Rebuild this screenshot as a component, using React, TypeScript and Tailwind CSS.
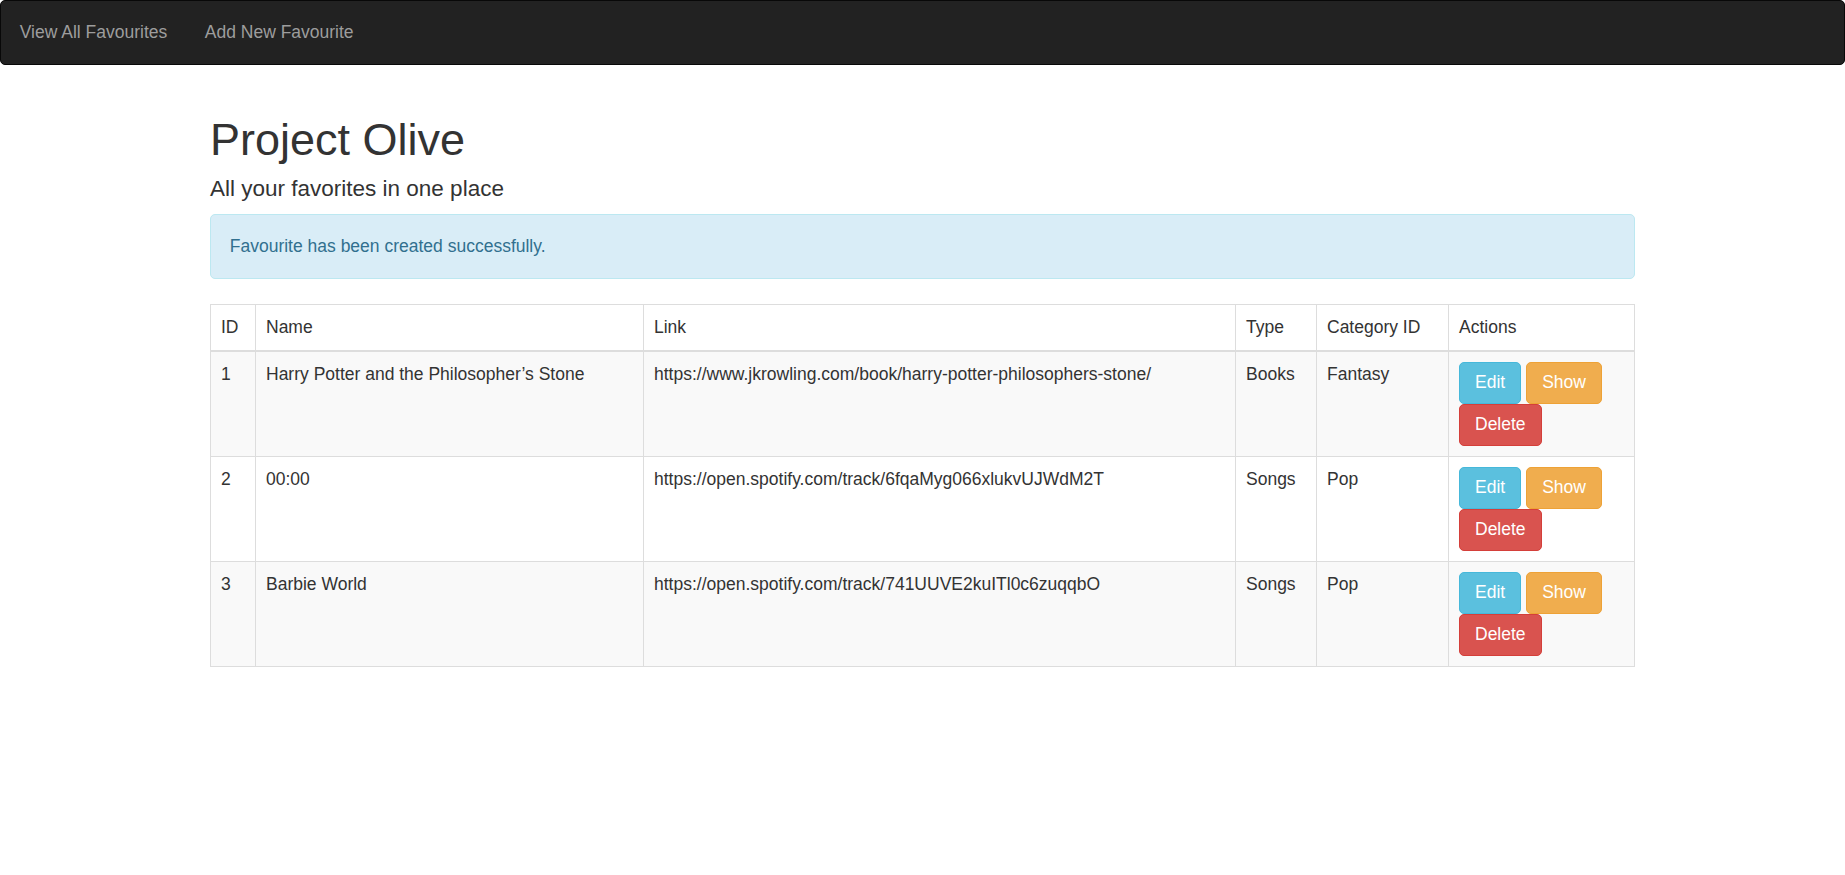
import React from 'react';

type Favourite = {
  id: number;
  name: string;
  link: string;
  type: string;
  category: string;
};

const favourites: Favourite[] = [
  {
    id: 1,
    name: 'Harry Potter and the Philosopher\u2019s Stone',
    link: 'https://www.jkrowling.com/book/harry-potter-philosophers-stone/',
    type: 'Books',
    category: 'Fantasy',
  },
  {
    id: 2,
    name: '00:00',
    link: 'https://open.spotify.com/track/6fqaMyg066xlukvUJWdM2T',
    type: 'Songs',
    category: 'Pop',
  },
  {
    id: 3,
    name: 'Barbie World',
    link: 'https://open.spotify.com/track/741UUVE2kuITl0c6zuqqbO',
    type: 'Songs',
    category: 'Pop',
  },
];

export default function App() {
  return (
    <div className="min-h-screen bg-white font-['Liberation_Sans',Arial,sans-serif] text-[17.5px] leading-[25px] text-[#333]">
      {/* navbar */}
      <nav className="h-[65px] bg-[#222] border border-[#080808] rounded-[5px] flex items-center mb-[25px]">
        <a className="px-[18.75px] text-[#9d9d9d]" href="#">View All Favourites</a>
        <a className="px-[18.75px] text-[#9d9d9d]" href="#">Add New Favourite</a>
      </nav>

      <div className="max-w-[1425px] mx-auto pt-[25px]">
        <h1 className="text-[45px] leading-[49.5px] mb-[12.5px]">Project Olive</h1>
        <h4 className="text-[22.5px] leading-[24.75px] mb-[12.5px]">All your favorites in one place</h4>

        <div className="border border-[#bce8f1] bg-[#d9edf7] text-[#31708f] rounded-[5px] px-[18.75px] py-[18.75px] mb-[25px]">
          Favourite has been created successfully.
        </div>

        <table className="w-full table-fixed border-collapse border border-[#ddd]">
          <thead>
            <tr>
              <th className="w-[45px] border border-[#ddd] border-b-2 p-[10px] text-left font-normal">ID</th>
              <th className="w-[388px] border border-[#ddd] border-b-2 p-[10px] text-left font-normal">Name</th>
              <th className="w-[592px] border border-[#ddd] border-b-2 p-[10px] text-left font-normal">Link</th>
              <th className="w-[81px] border border-[#ddd] border-b-2 p-[10px] text-left font-normal">Type</th>
              <th className="w-[132px] border border-[#ddd] border-b-2 p-[10px] text-left font-normal">Category ID</th>
              <th className="border border-[#ddd] border-b-2 p-[10px] text-left font-normal">Actions</th>
            </tr>
          </thead>
          <tbody>
            {favourites.map((fav, i) => (
              <tr key={fav.id} className={i % 2 === 0 ? 'bg-[#f9f9f9]' : 'bg-white'}>
                <td className="border border-[#ddd] p-[10px] align-top">{fav.id}</td>
                <td className="border border-[#ddd] p-[10px] align-top">{fav.name}</td>
                <td className="border border-[#ddd] p-[10px] align-top">{fav.link}</td>
                <td className="border border-[#ddd] p-[10px] align-top">{fav.type}</td>
                <td className="border border-[#ddd] p-[10px] align-top">{fav.category}</td>
                <td className="border border-[#ddd] p-[10px] align-top">
                  <div className="flex flex-wrap gap-x-[5px]">
                    <button className="h-[42px] px-[15px] flex items-center text-white bg-[#5bc0de] border border-[#46b8da] rounded-[5px]">
                      Edit
                    </button>
                    <button className="h-[42px] px-[15px] flex items-center text-white bg-[#f0ad4e] border border-[#eea236] rounded-[5px]">
                      Show
                    </button>
                    <button className="h-[42px] px-[15px] flex items-center text-white bg-[#d9534f] border border-[#d43f3a] rounded-[5px]">
                      Delete
                    </button>
                  </div>
                </td>
              </tr>
            ))}
          </tbody>
        </table>
      </div>
    </div>
  );
}
